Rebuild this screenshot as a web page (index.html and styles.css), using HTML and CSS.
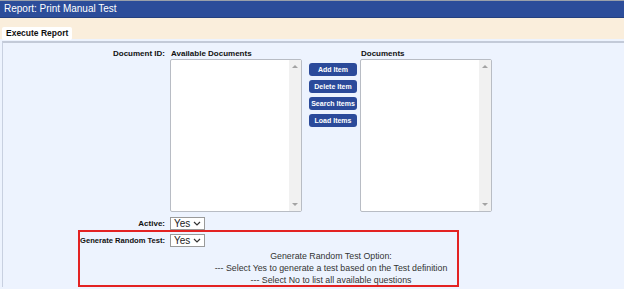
FILE: index.html
```html
<!DOCTYPE html>
<html>
<head>
  <title>Report: Print Manual Test</title>
  <link rel="stylesheet" href="styles.css">
</head>
<body>
  <div class="titlebar">Report: Print Manual Test</div>
  <div class="tabbar">
    <button class="tab">Execute Report</button>
  </div>

  <div class="panel">
    <div class="row docs">
      <div class="label">Document ID:</div>
      <div class="picker">
        <div class="list-col">
          <div class="list-head">Available Documents</div>
          <div class="listbox">
            <div class="scroll"><span class="up"></span><span class="down"></span></div>
          </div>
        </div>
        <div class="actions">
          <button class="btn">Add Item</button>
          <button class="btn">Delete Item</button>
          <button class="btn">Search Items</button>
          <button class="btn">Load Items</button>
        </div>
        <div class="list-col">
          <div class="list-head">Documents</div>
          <div class="listbox">
            <div class="scroll"><span class="up"></span><span class="down"></span></div>
          </div>
        </div>
      </div>
    </div>

    <div class="row active">
      <div class="label">Active:</div>
      <div class="select">Yes <svg width="8" height="5" viewBox="0 0 8 5"><path d="M1 1l3 3 3-3" fill="none" stroke="#333" stroke-width="1.2"/></svg></div>
    </div>

    <div class="random">
      <div class="row">
        <div class="label short">Generate Random Test:</div>
        <div class="select">Yes <svg width="8" height="5" viewBox="0 0 8 5"><path d="M1 1l3 3 3-3" fill="none" stroke="#333" stroke-width="1.2"/></svg></div>
      </div>
      <div class="help">
        Generate Random Test Option:<br>
        --- Select Yes to generate a test based on the Test definition<br>
        --- Select No to list all available questions
      </div>
    </div>
  </div>
</body>
</html>
```

FILE: styles.css
```css
body {
  margin: 0;
  background: #edf3fe;
  font-family: "Liberation Sans", Arial, sans-serif;
  color: #222;
  height: 289px;
  overflow: hidden;
}
.titlebar {
  border-top: 1px solid #9aa0aa;
  background: #2c4d9a;
  color: #fff;
  font-size: 10px;
  height: 16px;
  line-height: 16px;
  padding-left: 4px;
  border-bottom: 1px solid #24407f;
}
.tabbar {
  background: #faeedc;
  height: 21px;
  padding: 4px 2px 0;
  box-sizing: border-box;
}
.tab {
  background: #fff;
  border: none;
  border-radius: 2px;
  font-family: inherit;
  font-weight: bold;
  font-size: 8.5px;
  color: #111;
  height: 13px;
  padding: 0 4px;
}
.panel {
  margin-top: 2px;
  border-top: 2px solid #c3cad8;
  border-left: 1px solid #c8d0e0;
  margin-left: 2px;
  padding-top: 5px;
}
.row {
  display: flex;
  align-items: center;
}
.label {
  width: 162px;
  padding-right: 5px;
  text-align: right;
  font-weight: bold;
  font-size: 8px;
  color: #111;
  white-space: nowrap;
}
.docs {
  align-items: flex-start;
}
.docs .label {
  line-height: 11px;
}
.picker {
  display: flex;
}
.list-head {
  font-weight: bold;
  font-size: 8px;
  line-height: 11px;
  color: #111;
  padding-left: 1px;
}
.listbox {
  width: 130px;
  height: 151px;
  background: #fff;
  border: 1px solid #b8bcc4;
  border-radius: 2px;
  display: flex;
  justify-content: flex-end;
}
.scroll {
  width: 12px;
  background: #f1f1f1;
  display: flex;
  flex-direction: column;
  justify-content: space-between;
  align-items: center;
  padding: 5px 0;
}
.up, .down {
  width: 0;
  height: 0;
  border-left: 3px solid transparent;
  border-right: 3px solid transparent;
}
.up { border-bottom: 3px solid #a3a3a3; }
.down { border-top: 3px solid #a3a3a3; }
.actions {
  display: flex;
  flex-direction: column;
  gap: 4px;
  margin: 15px 3px 0 7px;
}
.btn {
  width: 48px;
  height: 13px;
  padding: 0;
  border: none;
  border-radius: 3px;
  background: #2b4a9a;
  color: #fff;
  font-family: inherit;
  font-weight: bold;
  font-size: 7px;
}
.select {
  display: flex;
  align-items: center;
  gap: 3px;
  height: 11px;
  padding: 0 3px;
  background: #fff;
  border: 1px solid #9a9a9a;
  font-size: 10px;
  color: #222;
}
.active {
  margin-top: 5px;
}
.random {
  margin: 0 0 0 75px;
  width: 377px;
  height: 51px;
  border: 2px solid #e32222;
  padding-top: 2px;
}
.label.short {
  width: 85px;
  padding-right: 5px;
  font-size: 7.6px;
}
.help {
  width: 322px;
  margin: 3px 0 0 90px;
  text-align: center;
  font-size: 8.8px;
  line-height: 12px;
  color: #333;
}
```
